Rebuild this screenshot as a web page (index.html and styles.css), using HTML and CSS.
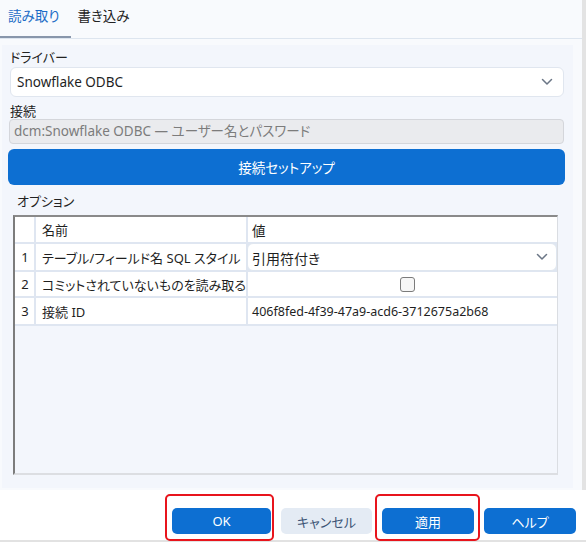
FILE: index.html
```html
<!DOCTYPE html>
<html lang="ja">
<head>
<meta charset="utf-8">
<link rel="stylesheet" href="styles.css">
</head>
<body>
<div class="top">
  <div class="main">
    <div class="tabs">
      <div class="tab active">読み取り</div>
      <div class="tab">書き込み</div>
    </div>
    <div class="panel">
      <div class="label">ドライバー</div>
      <div class="select">
        <span>Snowflake ODBC</span>
        <svg class="chev" width="12" height="8" viewBox="0 0 12 8"><path d="M1.5 1.5 L6 6 L10.5 1.5" fill="none" stroke="#6b7686" stroke-width="1.5" stroke-linecap="round" stroke-linejoin="round"/></svg>
      </div>
      <div class="label l2">接続</div>
      <div class="input">dcm:Snowflake ODBC — ユーザー名とパスワード</div>
      <div class="btn-setup">接続セットアップ</div>
      <div class="label opt">オプション</div>
      <div class="table">
        <div class="row head">
          <div class="c idx"></div>
          <div class="c name">名前</div>
          <div class="c val">値</div>
        </div>
        <div class="row r1">
          <div class="c idx">1</div>
          <div class="c name">テーブル/フィールド名 SQL スタイル</div>
          <div class="c val sel">
            <span>引用符付き</span>
            <svg class="chev" width="12" height="8" viewBox="0 0 12 8"><path d="M1.5 1.5 L6 6 L10.5 1.5" fill="none" stroke="#6b7686" stroke-width="1.5" stroke-linecap="round" stroke-linejoin="round"/></svg>
          </div>
        </div>
        <div class="row r2">
          <div class="c idx">2</div>
          <div class="c name">コミットされていないものを読み取る</div>
          <div class="c val chk"><span class="box"></span></div>
        </div>
        <div class="row r3">
          <div class="c idx">3</div>
          <div class="c name">接続 ID</div>
          <div class="c val small">406f8fed-4f39-47a9-acd6-3712675a2b68</div>
        </div>
      </div>
    </div>
  </div>
  <div class="scroll"></div>
</div>
<div class="footer">
  <div class="hl hl-ok"><div class="btn primary">OK</div></div>
  <div class="btn secondary">キャンセル</div>
  <div class="hl hl-apply"><div class="btn primary">適用</div></div>
  <div class="btn primary">ヘルプ</div>
</div>
</body>
</html>
```

FILE: styles.css
```css
* { box-sizing: border-box; }
html, body { margin: 0; padding: 0; }
body {
  width: 586px;
  height: 542px;
  background: #ffffff;
  font-family: "Noto Sans", "Noto Sans CJK JP", sans-serif;
  font-feature-settings: "palt";
  color: #1f1f1f;
  overflow: hidden;
}
.top {
  display: flex;
  height: 490px;
  background: #f8fafd;
}
.main { flex: 1; display: flex; flex-direction: column; }
.scroll { width: 4px; background: #e3e3e3; }

.tabs {
  display: flex;
  height: 39px;
  border-bottom: 1px solid #dde5ef;
  font-size: 13.5px;
}
.tab {
  padding: 6px 10px 0 8px;
  height: 38px;
  line-height: 20px;
  color: #222;
  white-space: nowrap;
}
.tab.active {
  color: #1c6cc6;
  padding-right: 12px;
  border-bottom: 2px solid #8896ab;
}
.tab + .tab { padding-left: 6px; }

.panel {
  flex: 1;
  margin: 6px 9px 2px 2px;
  background: #f3f6fc;
  padding: 3px 9px 0 8px;
  display: flex;
  flex-direction: column;
}
.label {
  font-size: 13px;
  line-height: 18px;
  color: #222;
}
.select {
  margin-top: 1px;
  height: 30px;
  background: #fff;
  border: 1px solid #e0e6ef;
  border-radius: 6px;
  display: flex;
  align-items: center;
  justify-content: space-between;
  padding: 0 10px 0 6px;
  font-size: 13.5px;
}
.label.l2 { margin-top: 5px; }
.input {
  margin-top: -1px;
  height: 25px;
  background: #eaebee;
  border: 1px solid #d4d6db;
  border-radius: 4px;
  margin-left: -1px;
  padding: 0 4px;
  font-size: 13.5px;
  line-height: 23px;
  color: #7c7c7c;
  white-space: nowrap;
}
.btn-setup {
  margin: 5px -1px 0 -2px;
  height: 36px;
  background: #0d6fd2;
  border-radius: 6px;
  color: #fff;
  font-size: 13.5px;
  display: flex;
  align-items: center;
  justify-content: center;
}
.label.opt { margin: 7px 0 0 7px; }

.table {
  margin: 5px 6px 13px 3px;
  flex: 1;
  border-top: 2px solid #8a8a8a;
  border-left: 2px solid #7c7c7c;
  border-right: 1px solid #dadde2;
  border-bottom: 2px solid #dcdee2;
  background: #f3f6fc;
  display: flex;
  flex-direction: column;
  font-size: 13.5px;
}
.row {
  display: grid;
  grid-template-columns: 19px 210px 1fr;
  column-gap: 2px;
  background: #dfe6f1;
  padding-bottom: 2px;
}
.row.head { height: 27px; }
.row.r1 { height: 28px; }
.row.r2 { height: 26px; }
.row.r3 { height: 28px; }
.c {
  background: #fff;
  display: flex;
  align-items: center;
  white-space: nowrap;
  overflow: hidden;
}
.c.idx { justify-content: center; padding-left: 1px; font-size: 13px; }
.c.name { padding-left: 6px; font-size: 13px; }
.c.val { padding-left: 4px; }
.c.sel {
  border: 1px solid #dfe6ef;
  border-radius: 6px;
  justify-content: space-between;
  padding: 0 8px 0 4px;
  margin: -1px 0 -1px -1px;
  font-size: 14px;
}
.c.sel span { padding-top: 2px; }
.c.chk { justify-content: center; }
.box {
  display: block;
  width: 15px;
  height: 15px;
  border: 1.5px solid #7b7b7b;
  border-radius: 3px;
  background: #f6f6f6;
  margin-left: 6px;
}
.c.small { font-size: 12.5px; padding-left: 4px; }

.footer {
  height: 52px;
  border-bottom: 2px solid #e2e2e2;
  display: flex;
  justify-content: flex-end;
  align-items: flex-start;
  padding: 18px 10px 0 0;
  gap: 10px;
}
.btn {
  height: 26px;
  border-radius: 5px;
  font-size: 13px;
  display: flex;
  align-items: center;
  justify-content: center;
}
.btn.primary { background: #0d6fd2; color: #fff; }
.btn.secondary { background: #e4ebf4; color: #3d5576; width: 91px; }
.hl { position: relative; }
.hl-ok .btn { width: 99px; }
.hl-apply .btn { width: 92px; }
.footer > .btn.primary { width: 92px; }
.hl::after {
  content: "";
  position: absolute;
  left: -7px;
  right: -3px;
  top: -14px;
  bottom: -7px;
  border: 2px solid #e8141c;
  border-radius: 5px;
}
.hl-apply::after { left: -7px; right: -6px; }
```
